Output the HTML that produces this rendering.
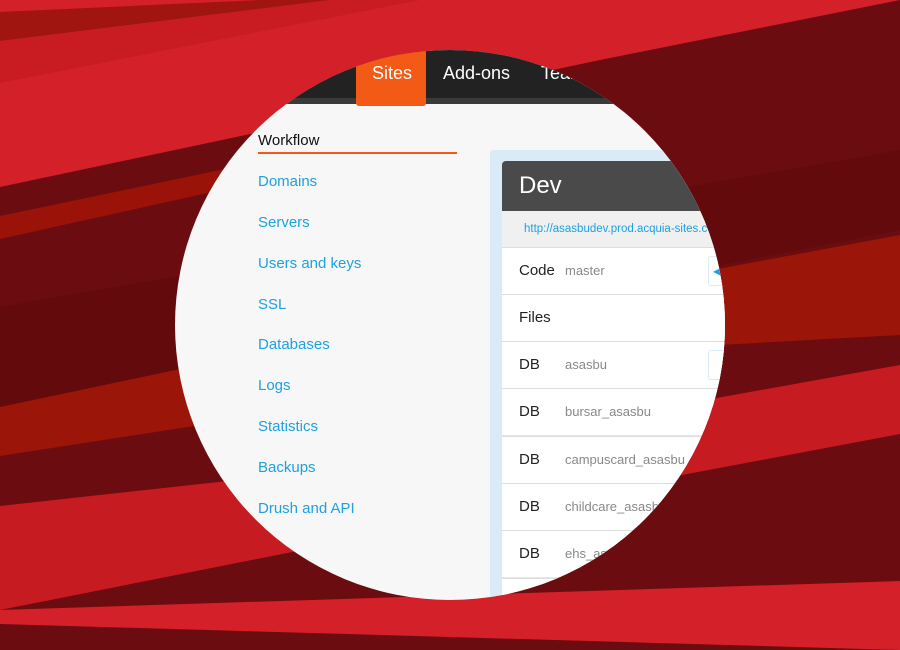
<!DOCTYPE html>
<html><head><meta charset="utf-8"><style>
*{margin:0;padding:0;box-sizing:border-box}
body{width:900px;height:650px;overflow:hidden;background:#d42028;font-family:"Liberation Sans",Arial,sans-serif;position:relative}
svg.bg{position:absolute;left:0;top:0}
.circ{position:absolute;left:175px;top:50px;width:550px;height:550px;border-radius:50%;overflow:hidden;background:#f7f7f7}
.in{position:absolute;left:-175px;top:-50px;width:900px;height:650px}
.nav{position:absolute;left:0;top:50px;width:900px;height:48px;background:#222}
.navline{position:absolute;left:0;top:98px;width:900px;height:6px;background:#3a3a3a}
.tab{position:absolute;top:50px;color:#fff;font-size:18px;line-height:46px}
.sites{position:absolute;left:356px;top:50px;width:70px;height:56px;background:#f25a16;border-radius:0 0 3px 3px}
.side a{position:absolute;left:258px;font-size:15px;color:#1da1e0;text-decoration:none}
.wf{position:absolute;left:258px;top:132px;font-size:15px;color:#111}
.ul{position:absolute;left:258px;top:152px;width:199px;height:2px;background:#f25a16}
.panel{position:absolute;left:490px;top:150px;width:300px;height:500px;background:#d8ebf7;border-radius:4px}
.head{position:absolute;left:502px;top:161px;width:300px;height:50px;background:#4a4a4a;border-radius:4px 4px 0 0;color:#fff;font-size:24px;line-height:50px;padding-left:17px}
.url{position:absolute;left:502px;top:211px;width:300px;height:36px;background:#f0f0f0;font-size:11.5px;color:#1da1e0;line-height:36px;padding-left:22px}
.row{position:absolute;left:502px;width:300px;height:47px;background:#fff;border-top:1px solid #ddd;font-size:15px;color:#222;line-height:46px;padding-left:17px}
.row span{position:absolute;left:63px;font-size:13px;color:#888}
.btn{position:absolute;width:30px;height:30px;top:8px;border:1px solid #d8ebf7;border-radius:3px;background:#fff;color:#1da1e0;font-size:12px;line-height:28px;padding-left:4px}
</style></head><body>
<svg class="bg" width="900" height="650">
<polygon points="0,12 260,0 330,0 0,41" fill="#a01510"/>
<polygon points="0,41 330,0 420,0 0,83" fill="#c81c22"/>
<polygon points="0,187 600,60 900,0 900,650 0,650" fill="#6b0c10"/>
<polygon points="0,307 900,150 900,230 0,407" fill="#620a0c"/>
<polygon points="0,216 220,170 420,128 420,146 0,239" fill="#9b1208"/>
<polygon points="0,407 180,369 900,235 900,335 720,345 0,456" fill="#9b1508"/>
<polygon points="0,506 300,473 900,365 900,434 650,481 0,610" fill="#c51b21"/>
<polygon points="0,610 900,581 900,650 0,624" fill="#d42028"/>
</svg>
<div class="circ"><div class="in">
<div class="nav"></div><div class="navline"></div>
<div class="sites"></div>
<div class="tab" style="left:372px">Sites</div>
<div class="tab" style="left:443px">Add-ons</div>
<div class="tab" style="left:541px">Teams</div>
<div class="wf">Workflow</div><div class="ul"></div>
<div class="side">
<a style="top:173px">Domains</a><a style="top:214px">Servers</a><a style="top:255px">Users and keys</a>
<a style="top:296px">SSL</a><a style="top:336px">Databases</a><a style="top:377px">Logs</a>
<a style="top:418px">Statistics</a><a style="top:459px">Backups</a><a style="top:500px">Drush and API</a>
</div>
<div class="panel"></div>
<div class="head">Dev</div>
<div class="url">http://asasbudev.prod.acquia-sites.com</div>
<div class="row" style="top:247px">Code <span style="left:63px">master</span><div class="btn" style="left:206px">◀</div></div>
<div class="row" style="top:294px">Files</div>
<div class="row" style="top:341px">DB<span>asasbu</span><div class="btn" style="left:206px"></div></div>
<div class="row" style="top:388px">DB<span>bursar_asasbu</span></div>
<div class="row" style="top:436px">DB<span>campuscard_asasbu</span></div>
<div class="row" style="top:483px">DB<span>childcare_asasbu</span></div>
<div class="row" style="top:530px">DB<span>ehs_asasbu</span></div>
<div class="row" style="top:578px"></div>
</div></div>
</body></html>
